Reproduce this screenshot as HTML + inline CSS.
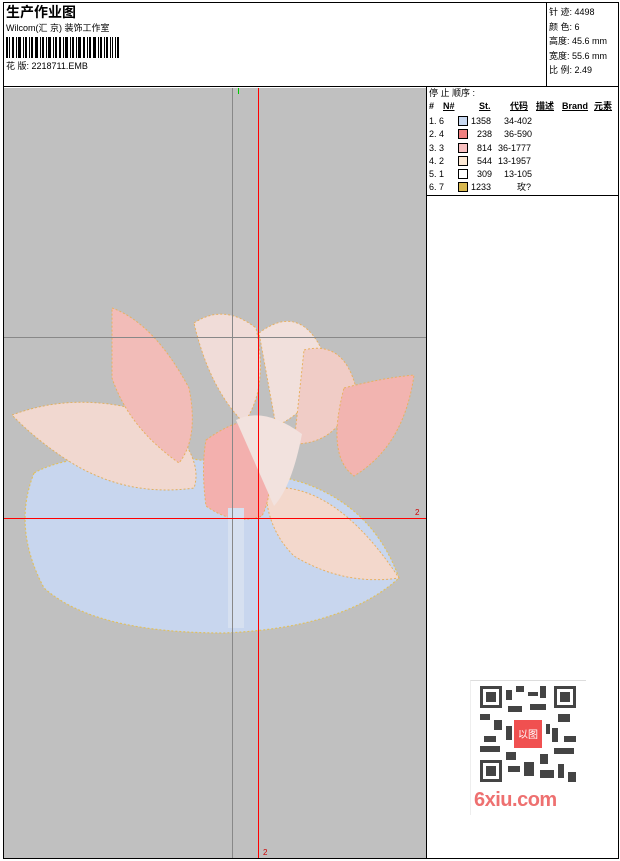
<!DOCTYPE html>
<html><head><meta charset="utf-8"><style>
*{margin:0;padding:0;box-sizing:border-box}
body{width:620px;height:861px;background:#fff;position:relative;overflow:hidden;font-family:"Liberation Sans","Noto Sans CJK SC",sans-serif;color:#000}
.a{position:absolute;white-space:nowrap}
.t{font-size:9px;line-height:11px}
</style></head><body>
<div class="a" style="left:3px;top:2px;width:616px;height:857px;border:1px solid #000"></div>
<div class="a" style="left:546px;top:2px;width:1px;height:85px;background:#000"></div>
<div class="a" style="left:3px;top:86px;width:616px;height:1px;background:#000"></div>
<div class="a" style="left:6px;top:2px;font-size:14px;font-weight:bold">生产作业图</div>
<div class="a t" style="left:6px;top:23px">Wilcom(汇 京) 装饰工作室</div>
<svg class="a" style="left:6px;top:37px" width="114" height="21">
<g fill="#000">
<rect x="0" y="0" width="2" height="21"/><rect x="3" y="0" width="1" height="21"/><rect x="6" y="0" width="2" height="21"/><rect x="10" y="0" width="1" height="21"/><rect x="12" y="0" width="3" height="21"/><rect x="17" y="0" width="1" height="21"/><rect x="19" y="0" width="2" height="21"/><rect x="23" y="0" width="1" height="21"/><rect x="25" y="0" width="2" height="21"/><rect x="29" y="0" width="3" height="21"/><rect x="34" y="0" width="1" height="21"/><rect x="36" y="0" width="2" height="21"/><rect x="40" y="0" width="1" height="21"/><rect x="42" y="0" width="3" height="21"/><rect x="47" y="0" width="1" height="21"/><rect x="49" y="0" width="2" height="21"/><rect x="53" y="0" width="2" height="21"/><rect x="57" y="0" width="1" height="21"/><rect x="59" y="0" width="3" height="21"/><rect x="64" y="0" width="1" height="21"/><rect x="66" y="0" width="2" height="21"/><rect x="70" y="0" width="1" height="21"/><rect x="72" y="0" width="3" height="21"/><rect x="77" y="0" width="2" height="21"/><rect x="81" y="0" width="1" height="21"/><rect x="83" y="0" width="2" height="21"/><rect x="87" y="0" width="3" height="21"/><rect x="92" y="0" width="1" height="21"/><rect x="94" y="0" width="2" height="21"/><rect x="98" y="0" width="1" height="21"/><rect x="100" y="0" width="2" height="21"/><rect x="104" y="0" width="1" height="21"/><rect x="106" y="0" width="1" height="21"/><rect x="109" y="0" width="1" height="21"/><rect x="111" y="0" width="2" height="21"/>
</g></svg>
<div class="a t" style="left:6px;top:61px">花 版: 2218711.EMB</div>
<div class="a t" style="left:549px;top:5px;line-height:14.5px">针 迹: 4498<br>颜 色: 6<br>高度: 45.6 mm<br>宽度: 55.6 mm<br>比 例: 2.49</div>

<div class="a" style="left:4px;top:88px;width:422px;height:770px;background:#c0c0c0;overflow:hidden">
<svg width="422" height="770" style="position:absolute;left:0;top:0">
<path d="M30 385 Q8 440 40 500 Q90 545 220 545 Q340 540 395 490 Q370 420 300 395 Q200 365 120 368 Q60 368 30 385Z" fill="#c8d6ee" stroke="#e0c060" stroke-width="1.2" stroke-dasharray="2 2"/>
<path d="M8 327 Q80 300 160 330 Q200 370 190 400 Q120 410 60 370 Q30 350 8 327Z" fill="#f1d8d0" stroke="#e0b060" stroke-dasharray="2 2"/>
<path d="M108 220 Q150 235 185 300 Q195 350 175 375 Q125 340 108 290Z" fill="#f2bcb8" stroke="#e8b060" stroke-dasharray="2 2"/>
<path d="M190 235 Q220 215 252 240 Q265 300 240 335 Q205 300 190 235Z" fill="#f0dcd8" stroke="#e8b060" stroke-dasharray="2 2"/>
<path d="M255 245 Q295 215 318 262 Q318 318 272 338 Z" fill="#f1e0dc" stroke="#e8b060" stroke-dasharray="2 2"/>
<path d="M300 262 Q340 252 352 300 Q338 356 290 356 Z" fill="#f0ccc6" stroke="#e8b060" stroke-dasharray="2 2"/>
<path d="M340 300 Q378 290 410 287 Q400 358 350 388 Q322 368 340 300Z" fill="#f2b4b0" stroke="#e8b060" stroke-dasharray="2 2"/>
<path d="M262 400 Q330 392 395 490 Q340 498 290 468 Q262 440 262 400Z" fill="#f3d8cc" stroke="#e8b060" stroke-dasharray="2 2"/>
<path d="M202 352 Q250 318 264 346 Q272 400 258 428 Q230 438 202 418 Q197 380 202 352Z" fill="#f3b0ae" stroke="#e8b060" stroke-dasharray="2 2"/>
<path d="M232 332 Q260 318 298 346 Q288 398 270 418 Z" fill="#f2e2de"/>
<rect x="224" y="420" width="16" height="120" fill="#d6e0f0"/>
</svg>
<div class="a" style="left:228px;top:0;width:1px;height:770px;background:#888"></div>
<div class="a" style="left:0;top:249px;width:422px;height:1px;background:#888"></div>
<div class="a" style="left:254px;top:0;width:1px;height:770px;background:#f00"></div>
<div class="a" style="left:0;top:430px;width:422px;height:1px;background:#f00"></div>
<div class="a" style="left:234px;top:0;width:1px;height:6px;background:#0c0"></div>
<div class="a" style="left:411px;top:420px;font-size:8px;color:#c00">2</div>
<div class="a" style="left:259px;top:760px;font-size:8px;color:#c00">2</div>
</div>
<div class="a" style="left:426px;top:87px;width:1px;height:772px;background:#000"></div>
<div class="a" style="left:427px;top:195px;width:192px;height:1px;background:#000"></div>
<div class="a t" style="left:429px;top:88px">停 止 顺序 :</div>
<div class="a t" style="left:429px;top:101px;font-weight:bold">
<span class="a" style="left:0">#</span><span class="a" style="left:14px;text-decoration:underline">N#</span><span class="a" style="left:50px;text-decoration:underline">St.</span><span class="a" style="left:81px;text-decoration:underline">代码</span><span class="a" style="left:107px;text-decoration:underline">描述</span><span class="a" style="left:133px;text-decoration:underline">Brand</span><span class="a" style="left:165px;text-decoration:underline">元素</span></div>
<div class="a t" style="left:429px;top:115px;line-height:13.3px;width:110px">
<div style="position:relative;height:13.3px">1. 6<span class="a" style="left:29px;top:1px;width:10px;height:10px;border:1px solid #000;background:#c8d8f0"></span><span class="a" style="left:42px">1358</span><span class="a" style="left:75px">34-402</span></div>
<div style="position:relative;height:13.3px">2. 4<span class="a" style="left:29px;top:1px;width:10px;height:10px;border:1px solid #000;background:#f08080"></span><span class="a" style="left:48px">238</span><span class="a" style="left:75px">36-590</span></div>
<div style="position:relative;height:13.3px">3. 3<span class="a" style="left:29px;top:1px;width:10px;height:10px;border:1px solid #000;background:#f8c0c0"></span><span class="a" style="left:48px">814</span><span class="a" style="left:69px">36-1777</span></div>
<div style="position:relative;height:13.3px">4. 2<span class="a" style="left:29px;top:1px;width:10px;height:10px;border:1px solid #000;background:#fce8d4"></span><span class="a" style="left:48px">544</span><span class="a" style="left:69px">13-1957</span></div>
<div style="position:relative;height:13.3px">5. 1<span class="a" style="left:29px;top:1px;width:10px;height:10px;border:1px solid #000;background:#fff"></span><span class="a" style="left:48px">309</span><span class="a" style="left:75px">13-105</span></div>
<div style="position:relative;height:13.3px">6. 7<span class="a" style="left:29px;top:1px;width:10px;height:10px;border:1px solid #000;background:#d8b850"></span><span class="a" style="left:42px">1233</span><span class="a" style="left:88px">玫?</span></div>
</div>
<div class="a" style="left:470px;top:680px;width:116px;height:135px;border-top:1px solid #ddd;border-left:1px solid #eee"></div>
<svg class="a" style="left:480px;top:686px" width="96" height="96">
<rect width="96" height="96" fill="#fff"/>
<g fill="#444">
<rect x="0" y="0" width="22" height="22"/><rect x="74" y="0" width="22" height="22"/><rect x="0" y="74" width="22" height="22"/>
<rect x="26" y="4" width="6" height="10"/><rect x="36" y="0" width="8" height="6"/><rect x="48" y="6" width="10" height="4"/><rect x="60" y="0" width="6" height="12"/>
<rect x="0" y="28" width="10" height="6"/><rect x="14" y="34" width="8" height="10"/><rect x="4" y="50" width="12" height="6"/><rect x="0" y="60" width="20" height="6"/>
<rect x="78" y="28" width="12" height="8"/><rect x="72" y="42" width="6" height="14"/><rect x="84" y="50" width="12" height="6"/><rect x="74" y="62" width="20" height="6"/>
<rect x="28" y="20" width="14" height="6"/><rect x="50" y="18" width="16" height="6"/><rect x="26" y="66" width="10" height="8"/><rect x="60" y="68" width="8" height="10"/>
<rect x="28" y="80" width="12" height="6"/><rect x="44" y="76" width="10" height="14"/><rect x="60" y="84" width="14" height="8"/><rect x="78" y="78" width="6" height="14"/><rect x="88" y="86" width="8" height="10"/>
<rect x="26" y="40" width="6" height="14"/><rect x="66" y="38" width="4" height="10"/>
</g>
<g fill="#fff"><rect x="3" y="3" width="16" height="16"/><rect x="77" y="3" width="16" height="16"/><rect x="3" y="77" width="16" height="16"/></g>
<g fill="#444"><rect x="6" y="6" width="10" height="10"/><rect x="80" y="6" width="10" height="10"/><rect x="6" y="80" width="10" height="10"/></g>
<rect x="34" y="34" width="28" height="28" fill="#f05050"/>
<text x="48" y="52" font-size="10" fill="#fff" text-anchor="middle" font-family="Noto Sans CJK SC">以图</text>
</svg>
<div class="a" style="left:474px;top:789px;font-size:20px;font-weight:bold;color:#ee7070;letter-spacing:-0.5px">6xiu.com</div>
</body></html>
